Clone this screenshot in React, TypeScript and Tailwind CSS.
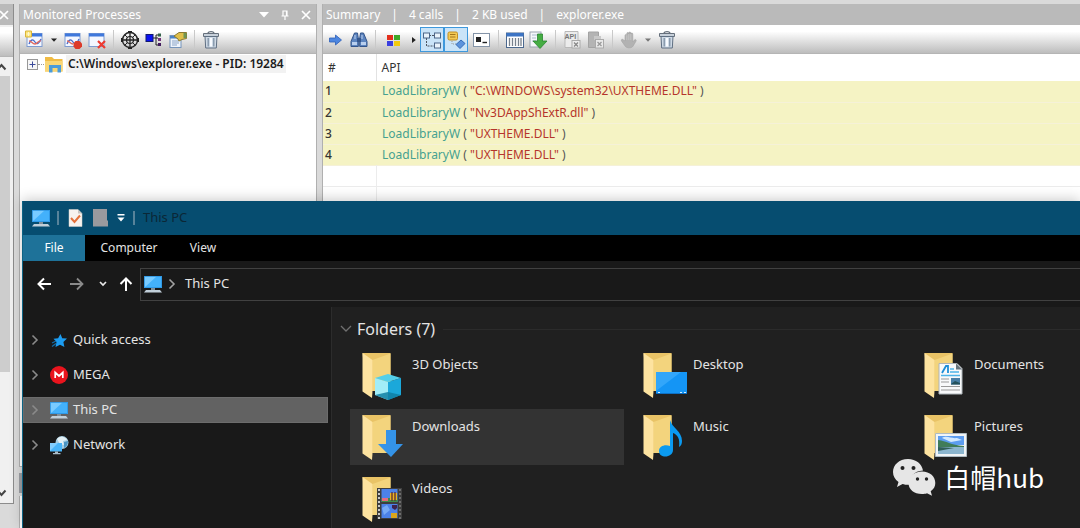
import React from "react";

type Kids = { children: React.ReactNode };

function Svg({ children, size = 20, view = 20 }: Kids & { size?: number; view?: number }) {
  return (
    <svg width={size} height={size} viewBox={`0 0 ${view} ${view}`} fill="none" aria-hidden="true" className="shrink-0">
      {children}
    </svg>
  );
}

function ToolButton({ label, children }: Kids & { label: string }) {
  return (
    <button type="button" aria-label={label} className="flex h-6 w-5 shrink-0 items-center justify-center">
      {children}
    </button>
  );
}

function Separator() {
  return (
    <div className="flex h-5 w-[5px] shrink-0 justify-center">
      <div className="w-px bg-[#c9c9c9]" />
    </div>
  );
}

function DropArrow({ label, color = "#222" }: { label: string; color?: string }) {
  return (
    <button type="button" aria-label={label} className="flex h-6 w-[10px] shrink-0 items-center justify-center">
      <svg width="6" height="4" viewBox="0 0 6 4" aria-hidden="true">
        <path d="M0 0.5h6L3 3.8z" fill={color} />
      </svg>
    </button>
  );
}

function ChartWindow() {
  return (
    <>
      <rect x="2" y="3.500" width="15" height="13" fill="#f4f7ff" stroke="#7e9bd0" />
      <rect x="2" y="3.500" width="15" height="3" fill="#3f78dc" />
    </>
  );
}

function NewMonitorIcon() {
  return (
    <Svg>
      <ChartWindow />
      <path d="M4 14c2-5 4-5 6-2s4 2 6-3" stroke="#4a6ac8" strokeWidth="1.300" />
      <path d="M4 11c3 0 3 3 6 3s3-4 6-3" stroke="#e2685c" strokeWidth="1.300" />
      <path d="M0.500 1h6v6h-6z" fill="#fbe376" stroke="#d9b53a" />
      <path d="M3.500 2v4M1.500 4h4" stroke="#fff8cc" />
    </Svg>
  );
}

function StopMonitorIcon() {
  return (
    <Svg>
      <ChartWindow />
      <path d="M4 14c2-5 4-5 6-2s4 2 6-3" stroke="#4a6ac8" strokeWidth="1.300" />
      <path d="M4 11c3 0 3 3 6 3" stroke="#e2685c" strokeWidth="1.300" />
      <path d="M12.500 11h4l2.500 2.500v3L16.500 19h-4L10.500 16.500v-3z" fill="#dc3a2a" />
    </Svg>
  );
}

function CloseMonitorIcon() {
  return (
    <Svg>
      <ChartWindow />
      <path d="M11 11l7 7M18 11l-7 7" stroke="#ee3b31" strokeWidth="2.200" />
    </Svg>
  );
}

function TargetIcon() {
  return (
    <Svg>
      <circle cx="10" cy="10" r="7.500" stroke="#222" strokeWidth="1.400" />
      <circle cx="10" cy="10" r="3.500" stroke="#222" strokeWidth="1.200" />
      <path d="M10 1v18M1 10h18" stroke="#222" strokeWidth="1.300" />
      <path d="M5 5l2 2M15 5l-2 2M5 15l2-2M15 15l-2-2" stroke="#222" />
      <path d="M8 1h4v2H8zM8 17h4v2H8zM1 8h2v4H1zM17 8h2v4h-2z" fill="#222" />
    </Svg>
  );
}

function TreeIcon() {
  return (
    <Svg>
      <path d="M8 8h6M12 5v10M12 5h4M12 15h4" stroke="#222" />
      <rect x="2" y="4.500" width="7" height="7" fill="#0a12f0" stroke="#111a70" />
      <rect x="14" y="3.500" width="3" height="3" fill="#35624a" />
      <rect x="14" y="8" width="3" height="3" fill="#73337a" />
      <rect x="14" y="13" width="3" height="3" fill="#421b5e" />
    </Svg>
  );
}

function PropertiesIcon() {
  return (
    <Svg>
      <rect x="2" y="5.500" width="11" height="12" fill="#eef4fc" stroke="#7594bb" />
      <path d="M2 6h11v2.500H2z" fill="#4d83c4" />
      <path d="M4 11h7M4 13h7M4 15h5" stroke="#8ba5c8" />
      <path d="M6 6l5-3.500h7.500v6L14 9.500l-3 1.500-1-2z" fill="#e0bf4a" stroke="#8c7b32" />
      <path d="M15.500 3h3v5h-3z" fill="#6f9552" />
    </Svg>
  );
}

function TrashIcon() {
  return (
    <Svg>
      <path d="M7 3.500c0-2.500 6-2.500 6 0" stroke="#66707c" strokeWidth="1.300" />
      <path d="M2.500 3.500h15v3h-15z" fill="#c7d0da" stroke="#66707c" />
      <path d="M4 6.500h12l-.7 11.500H4.700z" fill="#cfdae6" stroke="#5f6f82" />
      <path d="M7.200 8v8.500M12.800 8v8.500" stroke="#7f91a5" strokeWidth="1.300" />
      <path d="M10 8v8.500" stroke="#f8fbff" strokeWidth="2" />
    </Svg>
  );
}

function GoIcon() {
  return (
    <Svg>
      <path d="M4.500 8h6V5l6 5-6 5v-3h-6z" fill="#4d86e0" stroke="#2e5fb8" strokeWidth="0.800" />
    </Svg>
  );
}

function BinocularsIcon() {
  return (
    <Svg>
      <path d="M5.500 3h3l.8 5.500v8H2v-5zM14.500 3h-3l-.8 5.500v8H18v-5z" fill="#5c84bf" stroke="#33548a" />
      <path d="M8 8h4v4H8z" fill="#35568c" />
      <path d="M3 12h5v3H3zM12 12h5v3h-5z" fill="#b9cfee" />
      <path d="M6 5v4M13 5v4" stroke="#c0d3ef" />
    </Svg>
  );
}

function PaletteIcon() {
  return (
    <Svg>
      <rect x="5" y="5" width="6" height="5" fill="#e32f1c" />
      <rect x="12" y="5" width="6" height="5" fill="#3fa828" />
      <rect x="5" y="11" width="6" height="5" fill="#3a3fe0" />
      <rect x="12" y="11" width="6" height="5" fill="#f2cb0f" />
    </Svg>
  );
}

function HierarchyIcon() {
  return (
    <Svg>
      <path d="M7 5.500h6M4.500 8v8h8" stroke="#4d5560" strokeDasharray="2 1" />
      <g fill="#e9f3fb" stroke="#4d6688">
        <rect x="1.500" y="3" width="6" height="5" />
        <rect x="12.500" y="3" width="6" height="5" />
        <rect x="12.500" y="13" width="6" height="5" />
      </g>
    </Svg>
  );
}

function DecodeIcon() {
  return (
    <Svg>
      <rect x="2" y="2" width="9.500" height="8" rx="1.500" fill="#f3ca55" stroke="#c28e22" />
      <path d="M4 4.500h5.500M4 7h5.500" stroke="#a4751a" />
      <path d="M6 11v3h4" stroke="#999" strokeDasharray="1 1" />
      <path d="M10 14.500l5-4.500 4 3.500-5 5z" fill="#5c93dc" stroke="#356cb8" />
    </Svg>
  );
}

function ConsoleIcon() {
  return (
    <Svg>
      <rect x="1.500" y="3.500" width="16" height="13" fill="#fff" stroke="#8494a8" />
      <path d="M4 7h5v5H4z" fill="#222" />
      <path d="M10.500 12.500h4.500" stroke="#222" strokeWidth="1.400" />
    </Svg>
  );
}

function ColumnsIcon() {
  return (
    <Svg>
      <rect x="1.500" y="3" width="17" height="14.500" fill="#fff" stroke="#4b688e" />
      <path d="M1.500 3h17v3.500h-17z" fill="#3d74c4" />
      <path d="M4.500 8v8M7.500 8v8M10.500 8v8M13.500 8v8M16 8v8" stroke="#77818d" strokeWidth="1.300" />
    </Svg>
  );
}

function ExportIcon() {
  return (
    <Svg>
      <rect x="1" y="2" width="11" height="15" fill="#f5f7fa" stroke="#9aa4b0" />
      <path d="M3 5h6M3 8h4M3 11h4" stroke="#a9bace" />
      <path d="M8.500 4h5v7H18l-7 7.500L4 11h4.500z" fill="#45ad43" stroke="#2a8530" strokeWidth="0.800" />
    </Svg>
  );
}

function ApiFileIcon() {
  return (
    <Svg>
      <path d="M3 1.500h13v16H3z" fill="#ececec" stroke="#b9b9b9" />
      <text x="2.500" y="9" fontSize="7" fontWeight="700" fontFamily="Liberation Sans, sans-serif" fill="#777">API</text>
      <rect x="10" y="10.500" width="8" height="7.500" fill="#eee" stroke="#aaa" />
      <path d="M12 12.500l4 4M16 12.500l-4 4" stroke="#888" strokeWidth="1.300" />
    </Svg>
  );
}

function DisabledFileIcon() {
  return (
    <Svg>
      <path d="M2.500 2h10v15.500h-10z" fill="#b4b4b4" stroke="#a3a3a3" />
      <path d="M8 6h7v4H8z" fill="#c9c9c9" />
      <rect x="9.500" y="9.500" width="8" height="8.500" fill="#e9e9e9" stroke="#aaa" />
      <path d="M11.500 12l4 4M15.500 12l-4 4" stroke="#999" strokeWidth="1.300" />
    </Svg>
  );
}

function HandIcon() {
  return (
    <Svg>
      <path
        d="M6 11V5.500c0-1.200 1.800-1.200 1.800 0V3.500c0-1.300 2-1.300 2 0v-.5c0-1.300 2-1.300 2 0v1c0-1.300 2-1.300 2 0V12l1.600-2c1-1 2.300 0 1.600 1.200l-3 5c-1.500 2.300-6.500 2.300-8.200-.5L2.500 11c-.8-1.500 1-2.300 1.800-1.200z"
        fill="#b2b2b2"
        stroke="#a2a2a2"
        strokeWidth="0.600"
      />
      <path d="M7.800 5v5M9.800 4v6M11.800 4v6" stroke="#d2d2d2" strokeWidth="0.600" />
    </Svg>
  );
}

function MonitorIcon() {
  return (
    <Svg>
      <rect x="1" y="2" width="18" height="12" fill="#43b1fb" />
      <path d="M1 14V2h13z" fill="#79cbff" />
      <rect x="1.500" y="2.500" width="17" height="11" stroke="#2b93e0" strokeWidth="0.800" />
      <path d="M8 14h4v2H8z" fill="#80909c" />
      <path d="M3 16h14l2 2.500H1z" fill="#c1cfd9" />
    </Svg>
  );
}

function TreeFolderIcon() {
  return (
    <Svg>
      <path d="M1 3h7l2 2h8.500v12.500H1z" fill="#f0bb44" />
      <path d="M1 7h17.500v10.500H1z" fill="#f9d675" />
      <path d="M5 18.500V11h12v7.500h-3.500V14h-5v4.500z" fill="#4a9bda" />
    </Svg>
  );
}

function Chevron({ color = "#8a8a8a" }: { color?: string }) {
  return (
    <svg width="10" height="12" viewBox="0 0 10 12" fill="none" aria-hidden="true" className="shrink-0">
      <path d="M2.500 1.500L7 6l-4.500 4.500" stroke={color} strokeWidth="1.600" />
    </svg>
  );
}

function CloseGlyph() {
  return (
    <svg width="10" height="10" viewBox="0 0 10 10" aria-hidden="true" className="shrink-0">
      <path d="M1 1l8 8M9 1l-8 8" stroke="#fff" strokeWidth="1.700" />
    </svg>
  );
}

const folderBadges: Record<string, React.ReactNode> = {
  "3D Objects": (
    <>
      <path d="M13 25l13 4v18l-13-5z" fill="#a2edf7" />
      <path d="M39 25l-13 4v18l13-5z" fill="#1ba8da" />
      <path d="M26 21l13 4-13 4-13-4z" fill="#54cfe9" />
      <path d="M26 39l13 3-13 5-13-5z" fill="#0f7fa3" fillOpacity="0.850" />
    </>
  ),
  Desktop: (
    <>
      <path d="M13 19h31v22H13z" fill="#1495f5" />
      <path d="M13 38L38 19H13z" fill="#32a6fa" />
      <path d="M13 40.500h31" stroke="#0d70c4" />
      <path d="M15 39.500h2M37 39.500h2M41 39.500h2" stroke="#d5efff" />
    </>
  ),
  Documents: (
    <>
      <path d="M15 10.500h18l5 5V41H15z" fill="#f8f9fa" stroke="#aeb5ba" />
      <path d="M32 10.500v6h6z" fill="#67747c" />
      <path d="M18 20l4-7h2v7" stroke="#1c8ed8" strokeWidth="1.800" />
      <path d="M26 16h4M26 19h9M17 22.500h19" stroke="#4eb4e8" strokeWidth="1.500" />
      <path d="M17 26h8M17 29h8M17 33.500h19M17 37h19" stroke="#999" />
      <path d="M27 25h9v6.500h-9z" fill="#497fa6" />
      <path d="M27 31l4-3 5 2v1.500h-9z" fill="#24515b" />
    </>
  ),
  Downloads: <path d="M24 15h10v14h7L29 42 16 29h8z" fill="#3493e8" />,
  Music: (
    <path
      d="M27 5c2 8 12 11 12 21 0 3-1 5-3 6 1-8-1-12-6-14v17c0 8-14 9-14 1 0-5 6-7 11-5z"
      fill="#0b9af0"
    />
  ),
  Pictures: (
    <>
      <path d="M11.500 18.500h31v23h-31z" fill="#f1f4f6" stroke="#aebbc2" />
      <path d="M14 21h26v9H14z" fill="#5c9df0" />
      <path d="M18 23c5-3 9 1 15 0l5 2-11 2z" fill="#d2e9ff" />
      <path d="M14 25c9 1 12 5 26 6v3H14z" fill="#407c59" />
      <path d="M14 32h26v7H14z" fill="#8cb6cf" />
      <path d="M14 32l16 1-16 3z" fill="#315f5a" />
    </>
  ),
  Videos: (
    <>
      <path d="M15 11h25v31H15z" fill="#3e3e3e" />
      <path d="M17 12v30" stroke="#c9c9c9" strokeWidth="2" strokeDasharray="2 2" />
      <path d="M38 12v30" stroke="#6d6d6d" strokeWidth="2" strokeDasharray="2 2" />
      <path d="M19.500 12h16v13h-16zM19.500 27h16v14h-16z" fill="#4c82e8" />
      <path d="M19.500 21h16v4h-16z" fill="#3f8c48" />
      <path d="M20 21h6v3h-6z" fill="#e76a7d" />
      <path d="M28 16h7v7h-7z" fill="#e7b526" />
      <path d="M30 15v9M33 15v9" stroke="#5b2a32" strokeWidth="1.300" />
      <path d="M30 28h5v3l-2 2-3-2z" fill="#3d234f" />
      <path d="M20 31l5-3 3 5-6 5z" fill="#77aaf5" />
      <path d="M29 36h6v5h-6z" fill="#d9a51d" />
    </>
  ),
};

function FolderIcon({ name }: { name: string }) {
  return (
    <svg width="46" height="48" viewBox="0 0 46 48" fill="none" aria-hidden="true" className="shrink-0">
      <path d="M0.500 0h28v38h-24z" fill="#e9c366" />
      <path d="M10.500 7L28.500 0.500V38H10.500z" fill="#f3d47d" />
      <path d="M0.500 0l10 7v31l-0.500 7L0.500 38.500z" fill="#fde3a0" />
      {folderBadges[name]}
    </svg>
  );
}

function FolderTile({ name, active = false }: { name: string; active?: boolean }) {
  return (
    <button
      type="button"
      className={
        active
          ? "flex h-14 min-w-0 items-start gap-1 bg-[#333333] pt-[6px] pl-3 text-left"
          : "flex h-14 min-w-0 items-start gap-1 pt-[6px] pl-3 text-left"
      }
    >
      <FolderIcon name={name} />
      <span className="pt-[2px] leading-[18px]">{name}</span>
    </button>
  );
}

function StarIcon() {
  return (
    <Svg>
      <path d="M11.500 4l1.700 4.200 4.800.4-3.600 3.400 1 5-4.400-2.300L6.500 17l1-5-3-3.200 4.600-.5z" fill="#1c9cf0" />
      <path d="M3 13l4-2M3 16.500l4-3" stroke="#136ca8" strokeWidth="1.300" />
    </Svg>
  );
}

function MegaIcon() {
  return (
    <Svg>
      <circle cx="10" cy="10" r="9" fill="#e9141d" />
      <path d="M6.200 13V7.500L10 11l3.800-3.500V13" stroke="#fff" strokeWidth="1.700" />
    </Svg>
  );
}

function NetworkIcon() {
  return (
    <Svg>
      <circle cx="13" cy="7.500" r="6.500" fill="#a4cce2" />
      <path d="M8 4c3-4 9-2 10 1l-4 1 1 4-4-1z" fill="#e3f0f5" />
      <path d="M15 7l4-1c0 4-2 6-4 7z" fill="#4b94c2" />
      <path d="M1 8h12v8.500H1z" fill="#49b4f8" />
      <path d="M1 16V8h8z" fill="#82cdfd" />
      <path d="M6 16.500h3V18h2.500v1.300H4V18h2z" fill="#aabdca" />
    </Svg>
  );
}

function NavItem({ label, icon, selected = false }: { label: string; icon: React.ReactNode; selected?: boolean }) {
  return (
    <button
      type="button"
      className={
        selected
          ? "flex h-[26px] items-center gap-1 border border-[#6c6c6c] bg-[#626262] pl-1.5 text-left"
          : "flex h-[26px] items-center gap-1 border border-transparent pl-1.5 text-left"
      }
    >
      <Chevron />
      <span className="ml-[5px]">{icon}</span>
      <span>{label}</span>
    </button>
  );
}

function ScrollStrip() {
  return (
    <div className="mt-1 mb-6 flex w-[14px] shrink-0 flex-col border-r border-b border-[#8c8c8c] bg-[#f0f0f0]">
      <div className="flex h-[21px] items-center bg-[#bababa]">
        <button type="button" aria-label="Close left panel" className="-ml-px">
          <CloseGlyph />
        </button>
      </div>
      <div className="mt-0.5 h-[30px] border-b border-[#b5b5b5] bg-linear-to-b from-white from-20% to-[#bdbdbd]" />
      <div className="flex h-[19px] items-center">
        <svg width="7" height="8" viewBox="0 0 7 8" fill="none" aria-hidden="true">
          <path d="M-2 6l3.500-4L5.500 6.500" stroke="#444" strokeWidth="2" />
        </svg>
      </div>
      <div className="mr-[3px] flex-[73] bg-[#cdcdcd]" />
      <div className="flex-[27]" />
      <div className="flex h-[21px] items-center">
        <svg width="7" height="8" viewBox="0 0 7 8" fill="none" aria-hidden="true">
          <path d="M-2 2l3.500 4L5.500 1.500" stroke="#444" strokeWidth="2" />
        </svg>
      </div>
    </div>
  );
}

function ProcessPanel() {
  return (
    <div className="mt-1 flex w-[298px] shrink-0 flex-col">
      <section className="flex flex-1 flex-col border-x border-b border-[#b0b0b0] bg-white">
        <header className="flex h-[21px] items-center gap-3 bg-[#bababa] pr-[5px] pl-[3px] text-white">
          <h2 className="flex-1">Monitored Processes</h2>
          <button type="button" aria-label="Panel menu">
            <svg width="10" height="6" viewBox="0 0 10 6" aria-hidden="true">
              <path d="M0 0h10L5 5.500z" fill="#fff" />
            </svg>
          </button>
          <button type="button" aria-label="Pin panel">
            <svg width="8" height="10" viewBox="0 0 8 10" fill="none" aria-hidden="true">
              <path d="M2 6V1h4v5M0.500 6h7M4 6v4M5.500 1v5" stroke="#fff" strokeWidth="1.200" />
            </svg>
          </button>
          <button type="button" aria-label="Close panel">
            <CloseGlyph />
          </button>
        </header>
        <div className="mt-px flex h-7 items-center gap-1 border-b border-[#b5b5b5] bg-linear-to-b from-white from-20% to-[#bdbdbd] pl-[5px]">
          <ToolButton label="Monitor new process"><NewMonitorIcon /></ToolButton>
          <DropArrow label="New process options" />
          <ToolButton label="Stop monitoring"><StopMonitorIcon /></ToolButton>
          <ToolButton label="Close process"><CloseMonitorIcon /></ToolButton>
          <Separator />
          <ToolButton label="Find window"><TargetIcon /></ToolButton>
          <ToolButton label="Process tree"><TreeIcon /></ToolButton>
          <ToolButton label="Properties"><PropertiesIcon /></ToolButton>
          <Separator />
          <ToolButton label="Delete"><TrashIcon /></ToolButton>
        </div>
        <div className="flex h-5 items-center pl-[7px]">
          <button type="button" aria-label="Expand process">
            <svg width="11" height="11" viewBox="0 0 11 11" fill="none" aria-hidden="true">
              <rect x="0.500" y="0.500" width="10" height="10" fill="#f7f7f7" stroke="#989898" />
              <path d="M2.500 5.500h6M5.500 2.500v6" stroke="#3a4a9a" />
            </svg>
          </button>
          <span className="w-[6px] border-b border-dotted border-[#999]" />
          <TreeFolderIcon />
          <span className="ml-[2px] bg-[#f2f2f2] px-[2px] leading-[18px] font-semibold text-[#1c1c1c]">
            C:\Windows\explorer.exe - PID: 19284
          </span>
        </div>
      </section>
      <div className="mt-[6px] h-5 bg-[#9c9ea3]" />
      <div className="mt-[3px] h-8 border-x border-[#b0b0b0] bg-white" />
    </div>
  );
}

const calls = [
  "C:\\WINDOWS\\system32\\UXTHEME.DLL",
  "Nv3DAppShExtR.dll",
  "UXTHEME.DLL",
  "UXTHEME.DLL",
];

function SummaryPanel() {
  return (
    <section className="mt-1 flex min-w-0 flex-1 flex-col border-l border-[#b0b0b0] bg-white">
      <header className="flex h-[21px] items-center gap-[11px] bg-[#bababa] pl-[3px] text-white">
        <h2>Summary</h2>
        <span>|</span>
        <span>4 calls</span>
        <span>|</span>
        <span>2 KB used</span>
        <span>|</span>
        <span>explorer.exe</span>
      </header>
      <div className="mt-px flex h-7 items-center gap-1 border-b border-[#b5b5b5] bg-linear-to-b from-white from-20% to-[#bdbdbd] pl-[2px]">
        <ToolButton label="Go to"><GoIcon /></ToolButton>
        <ToolButton label="Find"><BinocularsIcon /></ToolButton>
        <Separator />
        <ToolButton label="Colours"><PaletteIcon /></ToolButton>
        <button type="button" aria-label="Colour options" className="flex h-6 w-[10px] shrink-0 items-center justify-end">
          <svg width="4" height="6" viewBox="0 0 4 6" aria-hidden="true">
            <path d="M0 0v6l3.800-3z" fill="#222" />
          </svg>
        </button>
        <div className="flex h-[25px] w-12 shrink-0">
          <button type="button" aria-label="Tree view" aria-pressed="true" className="flex flex-1 items-center justify-center border border-[#3e98dc] bg-[#cae4f8]">
            <HierarchyIcon />
          </button>
          <button type="button" aria-label="Decode parameters" aria-pressed="true" className="flex flex-1 items-center justify-center border border-[#3e98dc] bg-[#cae4f8]">
            <DecodeIcon />
          </button>
        </div>
        <ToolButton label="Console"><ConsoleIcon /></ToolButton>
        <Separator />
        <ToolButton label="Columns"><ColumnsIcon /></ToolButton>
        <ToolButton label="Export"><ExportIcon /></ToolButton>
        <Separator />
        <ToolButton label="API filter"><ApiFileIcon /></ToolButton>
        <ToolButton label="Remove filter"><DisabledFileIcon /></ToolButton>
        <Separator />
        <ToolButton label="Pause"><HandIcon /></ToolButton>
        <DropArrow label="Pause options" color="#777" />
        <ToolButton label="Clear"><TrashIcon /></ToolButton>
      </div>
      <table className="w-full table-fixed border-collapse text-left">
        <thead>
          <tr className="h-[27px] text-[#333]">
            <th scope="col" className="w-[53px] border-r border-[#e2e2e2] pl-[5px] font-normal">#</th>
            <th scope="col" className="pl-[5px] font-normal">API</th>
          </tr>
        </thead>
        <tbody>
          {calls.map((arg, i) => (
            <tr key={i} className="h-[21px] border-b border-[#f5f1d8] bg-[#f5f3c4]">
              <td className="pl-0.5 leading-5 font-medium text-[#333]">{i + 1}</td>
              <td className="pl-[6px] leading-5 whitespace-nowrap text-[#555]">
                <span className="text-[#45a190]">LoadLibraryW</span> ({" "}
                <span className="text-[#b5352b]">"{arg}"</span> )
              </td>
            </tr>
          ))}
          <tr className="h-[21px] border-b border-[#ececec]">
            <td className="border-r border-[#ececec]" />
            <td />
          </tr>
          <tr className="h-[21px]">
            <td className="border-r border-[#ececec]" />
            <td />
          </tr>
        </tbody>
      </table>
    </section>
  );
}

function ExplorerWindow() {
  return (
    <section className="absolute top-[201px] right-0 bottom-0 left-[22px] flex flex-col overflow-hidden border-l border-[#0d6485] bg-[#191919] text-[13px] text-[#e4e4e4] shadow-[0_-2px_12px_rgba(0,0,0,0.2)]">
      <header className="flex h-[34px] shrink-0 items-center bg-[#064d70] pl-2">
        <MonitorIcon />
        <span className="mx-[6px] h-3.5 w-[2px] bg-[#58839a]" />
        <Svg>
          <path d="M4 1.500h9l4 4v13H4z" fill="#f7f2ee" stroke="#d6d0cb" strokeWidth="0.500" />
          <path d="M13 1.500v4h4z" fill="#c9c5c2" />
          <path d="M6 10l3.500 4L15 7.500" stroke="#e4713b" strokeWidth="2" />
        </Svg>
        <span className="ml-1">
          <Svg>
            <path d="M4 1h14v11l1 1v5.500H4z" fill="#9a9a9e" />
          </Svg>
        </span>
        <button type="button" aria-label="Customize toolbar" className="ml-2">
          <svg width="8" height="8" viewBox="0 0 8 8" aria-hidden="true">
            <path d="M0.500 0h7v1.500h-7zM0.500 3.500h7L4 7.500z" fill="#fff" />
          </svg>
        </button>
        <span className="mx-2 h-3.5 w-[2px] bg-[#58839a]" />
        <h1 className="text-[#0b2736]">This PC</h1>
      </header>
      <nav className="flex h-[26px] shrink-0 bg-black text-[12px]">
        <button type="button" className="w-[62px] bg-[#1e7299] text-white">File</button>
        <button type="button" className="w-[88px]">Computer</button>
        <button type="button" className="w-[60px]">View</button>
      </nav>
      <div className="flex h-[46px] shrink-0 items-center pl-[13px]">
        <button type="button" aria-label="Back">
          <Svg size={16} view={16}><path d="M15 8H2.500M8 2.500L2.500 8 8 13.500" stroke="#fff" strokeWidth="2" /></Svg>
        </button>
        <button type="button" aria-label="Forward" className="ml-[17px]">
          <Svg size={16} view={16}><path d="M1 8h12.500M8 2.500L13.500 8 8 13.500" stroke="#8a8a8a" strokeWidth="1.800" /></Svg>
        </button>
        <button type="button" aria-label="Recent locations" className="ml-3.5">
          <svg width="8" height="8" viewBox="0 0 8 8" fill="none" aria-hidden="true">
            <path d="M1 2l3 3 3-3" stroke="#e8e8e8" strokeWidth="1.700" />
          </svg>
        </button>
        <button type="button" aria-label="Up" className="ml-[11px]">
          <Svg size={16} view={16}><path d="M8 15V2.500M2.500 8L8 2.500 13.500 8" stroke="#fff" strokeWidth="2" /></Svg>
        </button>
        <div className="ml-[6px] flex h-[33px] flex-1 items-center border-y border-l border-[#414141] pl-[2px]">
          <MonitorIcon />
          <span className="ml-1"><Chevron color="#a2a2a2" /></span>
          <button type="button" className="ml-2">This PC</button>
        </div>
      </div>
      <div className="flex min-h-0 flex-1">
        <aside className="flex w-[309px] shrink-0 flex-col gap-[9px] border-r border-[#2c2c2c] pt-[20px] pr-[3px]">
          <NavItem label="Quick access" icon={<StarIcon />} />
          <NavItem label="MEGA" icon={<MegaIcon />} />
          <NavItem label="This PC" icon={<MonitorIcon />} selected />
          <NavItem label="Network" icon={<NetworkIcon />} />
        </aside>
        <main className="min-w-0 flex-1 overflow-hidden bg-[#202020]">
          <div className="flex h-10 items-center pt-1 pl-[8px]">
            <svg width="12" height="8" viewBox="0 0 12 8" fill="none" aria-hidden="true">
              <path d="M1 1l5 5 5-5" stroke="#707070" strokeWidth="1.300" />
            </svg>
            <h2 className="ml-[5px] text-[16px]">Folders (7)</h2>
            <span className="ml-2 h-px flex-1 bg-[#2b2b2b]" />
          </div>
          <div className="grid grid-cols-[274px_274px_minmax(0,1fr)] gap-x-[7px] gap-y-[6px] pl-[18px]">
            <FolderTile name="3D Objects" />
            <FolderTile name="Desktop" />
            <FolderTile name="Documents" />
            <FolderTile name="Downloads" active />
            <FolderTile name="Music" />
            <FolderTile name="Pictures" />
            <FolderTile name="Videos" />
          </div>
        </main>
      </div>
    </section>
  );
}

function Watermark() {
  return (
    <div className="absolute right-9 bottom-8 flex items-center gap-2 text-white">
      <svg width="44" height="38" viewBox="0 0 44 38" aria-hidden="true">
        <path d="M16 1C7 1 1 7 1 14c0 4 2 7.500 5.500 10L5 29l5.500-3c2 .7 5 1 7 .8C17 19 22 13 31 12.500 30 6 24 1 16 1z" fill="#e6e6e6" />
        <path d="M30 13.500c-8 0-13.500 5-13.500 11.500S22 36 30 36c2 0 3.500-.2 5-.8l5 2.600-1.300-4.500c3-2 4.600-5 4.600-8.300 0-6.500-5.300-11.500-13.300-11.500z" fill="#e6e6e6" />
        <g fill="#222">
          <circle cx="10.500" cy="10" r="2" />
          <circle cx="21.500" cy="10" r="2" />
          <circle cx="25.500" cy="21" r="1.700" />
          <circle cx="34.500" cy="21" r="1.700" />
        </g>
      </svg>
      <span className="font-['Noto_Sans_CJK_SC',sans-serif] text-[26px] leading-9">白帽hub</span>
    </div>
  );
}

export default function App() {
  return (
    <div className="relative flex min-h-screen overflow-hidden bg-[#dadada] font-['Noto_Sans','Noto_Sans_CJK_SC',sans-serif] text-[12px]">
      <ScrollStrip />
      <div className="w-[5px] shrink-0" />
      <ProcessPanel />
      <div className="w-[5px] shrink-0" />
      <SummaryPanel />
      <ExplorerWindow />
      <Watermark />
    </div>
  );
}
